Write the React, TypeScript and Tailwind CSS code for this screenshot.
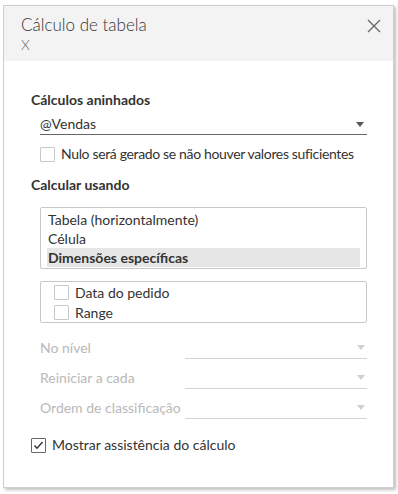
import React from 'react';

const Arrow: React.FC<{ light?: boolean }> = ({ light }) => (
  <svg width="8" height="5" viewBox="0 0 8 5" className="shrink-0">
    <path d="M0 0 L8 0 L4 5 Z" fill={light ? '#d0d0d0' : '#555'} />
  </svg>
);

const Box: React.FC<{ checked?: boolean; dark?: boolean }> = ({ checked, dark }) => (
  <span
    className={`w-[15px] h-[15px] shrink-0 border rounded-[1px] bg-white flex items-center justify-center ${
      dark ? 'border-[#666]' : 'border-[#c8c8c8]'
    }`}
  >
    {checked && (
      <svg width="11" height="9" viewBox="0 0 11 9">
        <path d="M1.5 4.5 L4 7.2 L9.5 1" fill="none" stroke="#333" strokeWidth="1.4" />
      </svg>
    )}
  </span>
);

const LevelRow: React.FC<{ label: string }> = ({ label }) => (
  <div className="flex items-start h-[30px]">
    <span className="w-[145px] whitespace-nowrap text-[#b9b9b9] text-[14px] leading-[20px] pt-[1px]">{label}</span>
    <div className="flex-1 h-[22px] border-b border-[#d4d4d4] flex items-center justify-end pr-[2px]">
      <Arrow light />
    </div>
  </div>
);

export default function App() {
  return (
    <div className="w-[398px] h-[494px] bg-white p-[3px] pt-[5px]" style={{ fontFamily: 'Lato, "Noto Sans", sans-serif' }}>
      <div className="w-[391px] h-[483px] border border-[#cfcfcf] shadow-[2px_2px_3px_rgba(0,0,0,0.25)] bg-white flex flex-col">
        <div className="h-[55px] bg-[#f3f3f3] flex justify-between pl-[17px] pr-[12px] pt-[8px]">
          <div className="flex flex-col">
            <span className="text-[17px] leading-[22px] text-[#333] font-light">Cálculo de tabela</span>
            <span className="text-[14px] leading-[17px] text-[#666] font-light">X</span>
          </div>
          <svg width="14" height="14" viewBox="0 0 14 14" className="mt-[5px]">
            <path d="M1 1 L13 13 M13 1 L1 13" stroke="#666" strokeWidth="1.3" />
          </svg>
        </div>

        <div className="flex flex-col pl-[27px] pr-[26px] text-[#333]">
          <div className="mt-[30px] text-[14px] leading-[18px] font-bold">Cálculos aninhados</div>
          <div className="ml-[9px] mt-[6px] h-[20px] border-b border-[#666] flex items-center justify-between pr-[3px]">
            <span className="text-[14px] leading-[18px] -mt-[2px]">@Vendas</span>
            <Arrow />
          </div>
          <label className="ml-[9px] mt-[10px] flex items-center gap-[6px] text-[14px] leading-[18px]">
            <Box />
            <span className="whitespace-nowrap tracking-[-0.35px]">Nulo será gerado se não houver valores suficientes</span>
          </label>
          <div className="mt-[13px] text-[14px] leading-[18px] font-bold">Calcular usando</div>
          <div className="ml-[9px] mt-[13px] h-[62px] border border-[#c8c8c8] rounded-[2px] py-[2px] pl-[6px] pr-[6px] flex flex-col text-[14px]">
            <div className="h-[19px] leading-[19px] px-[1px]">Tabela (horizontalmente)</div>
            <div className="h-[19px] leading-[19px] px-[1px]">Célula</div>
            <div className="h-[19px] leading-[19px] px-[1px] bg-[#e6e6e6] font-bold">Dimensões específicas</div>
          </div>
          <div className="ml-[9px] mt-[12px] h-[42px] border border-[#c8c8c8] rounded-[2px] pl-[13px] pt-[3px] flex flex-col gap-[5px] text-[14px]">
            <label className="flex items-center gap-[6px] h-[15px]">
              <Box />
              <span className="leading-[18px]">Data do pedido</span>
            </label>
            <label className="flex items-center gap-[6px] h-[15px]">
              <Box />
              <span className="leading-[18px]">Range</span>
            </label>
          </div>
          <div className="ml-[9px] mt-[14px] flex flex-col">
            <LevelRow label="No nível" />
            <LevelRow label="Reiniciar a cada" />
            <LevelRow label="Ordem de classificação" />
          </div>
          <label className="mt-[9px] flex items-center gap-[6px] text-[14px] leading-[18px]">
            <Box checked dark />
            <span>Mostrar assistência do cálculo</span>
          </label>
        </div>
      </div>
    </div>
  );
}
